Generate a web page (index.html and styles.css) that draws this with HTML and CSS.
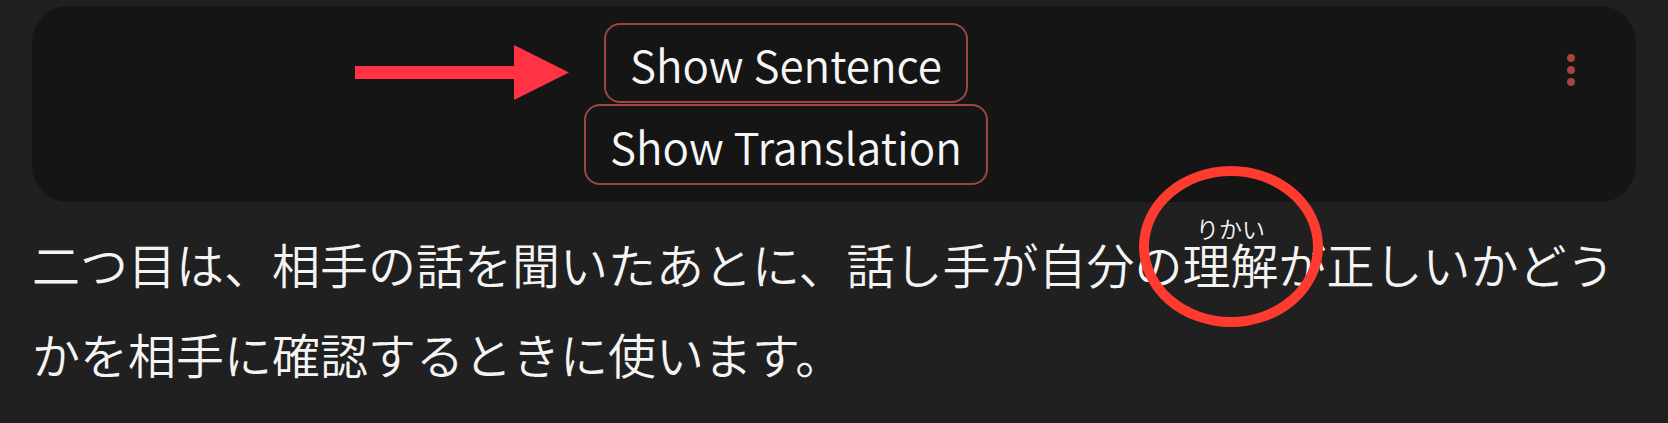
FILE: index.html
```html
<!DOCTYPE html>
<html lang="ja">
<head>
<meta charset="utf-8">
<title>Sentence card</title>
<link rel="stylesheet" href="styles.css">
</head>
<body>
<div class="page">
  <section class="card">
    <div class="card-main">
      <button class="btn">Show Sentence</button>
      <button class="btn">Show Translation</button>
    </div>
    <div class="card-menu">
      <span class="dot"></span>
      <span class="dot"></span>
      <span class="dot"></span>
    </div>
  </section>
  <p class="sentence">二つ目は、相手の話を聞いたあとに、話し手が自分の<ruby>理解<rt>りかい</rt></ruby>が正しいかどうかを相手に確認するときに使います。</p>

  <svg class="anno-arrow" width="214" height="55" viewBox="0 0 214 55" aria-hidden="true">
    <rect x="0" y="21" width="160" height="13" fill="#ff3344"/>
    <polygon points="159,0 214,27.5 159,55" fill="#ff3344"/>
  </svg>
  <div class="anno-ring" aria-hidden="true"></div>
</div>
</body>
</html>
```

FILE: styles.css
```css
html, body {
  margin: 0;
  padding: 0;
  background: #202020;
}

body {
  font-family: "Noto Sans CJK JP", "Noto Sans", sans-serif;
  color: #f4f4f4;
}

.page {
  position: relative;
  width: 1668px;
  height: 423px;
  box-sizing: border-box;
  padding: 6px 32px 0;
  overflow: hidden;
}

.card {
  display: flex;
  background: #151515;
  border-radius: 36px;
  padding: 17px;
}

.card-main {
  flex: 1;
  display: flex;
  flex-direction: column;
  align-items: center;
}

.btn {
  font-family: "Noto Sans CJK JP", "Noto Sans", sans-serif;
  font-size: 44px;
  font-weight: 350;
  color: #f6f6f6;
  background: transparent;
  border: 2px solid #9c463f;
  border-radius: 16px;
  height: 80px;
  padding: 2px 24px 0;
  display: flex;
  align-items: center;
  justify-content: center;
  line-height: 1;
  margin: 0;
}

.btn + .btn {
  margin-top: 1px;
  height: 81px;
}

.card-menu {
  width: 96px;
  display: flex;
  flex-direction: column;
  align-items: center;
  gap: 4px;
  padding-top: 31px;
}

.dot {
  width: 8px;
  height: 8px;
  border-radius: 50%;
  background: #a5463f;
}

.sentence {
  margin: 15px 0 0;
  font-size: 48px;
  line-height: 90px;
  font-weight: 350;
}

.sentence ruby {
  ruby-align: center;
}

.sentence rt {
  font-size: 23px;
  ruby-align: center;
  letter-spacing: 0;
}

.anno-arrow {
  position: absolute;
  left: 355px;
  top: 45px;
}

.anno-ring {
  position: absolute;
  left: 1139px;
  top: 166px;
  width: 184px;
  height: 161px;
  box-sizing: border-box;
  border: 10px solid #ff3b30;
  border-radius: 50%;
}
```
